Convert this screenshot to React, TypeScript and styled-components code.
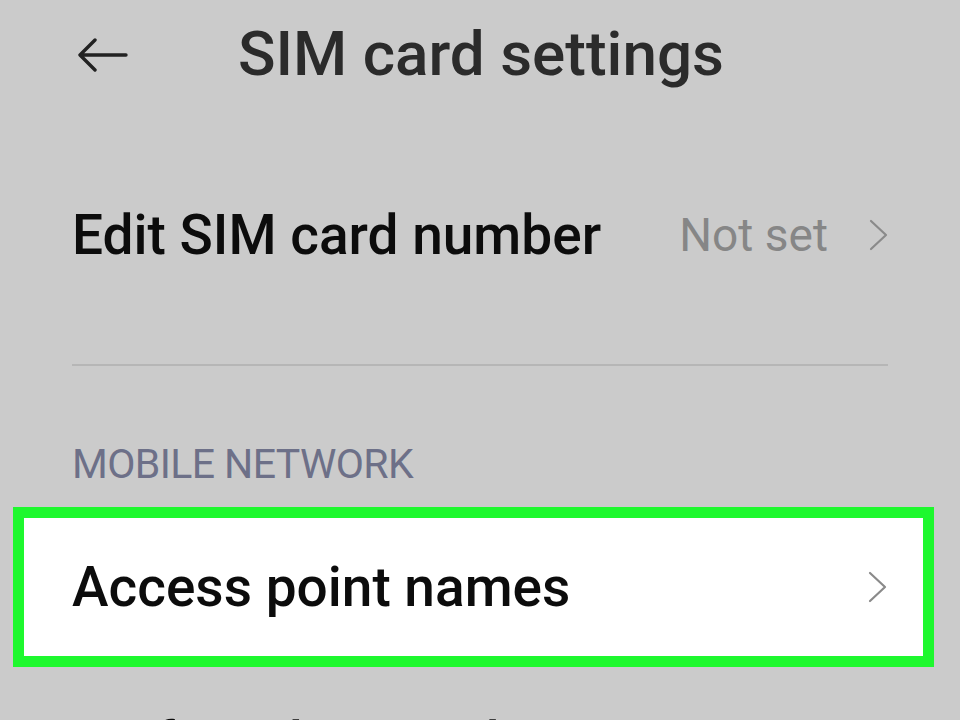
import React from 'react';
import styled, { createGlobalStyle } from 'styled-components';

const GlobalStyle = createGlobalStyle`
  html, body {
    margin: 0;
    padding: 0;
    background: #cbcbcb;
    overflow: hidden;
  }
  body {
    font-family: Roboto, "Liberation Sans", Arial, sans-serif;
  }
`;

const Screen = styled.div`
  width: 960px;
  height: 720px;
  background: #cbcbcb;
  overflow: hidden;
`;

const Header = styled.header`
  display: flex;
  align-items: center;
  gap: 110px;
  height: 108px;
  padding-left: 78px;
`;

const BackButton = styled.button`
  display: flex;
  align-items: center;
  justify-content: center;
  width: 50px;
  height: 34px;
  padding: 0;
  border: 0;
  background: none;
  color: #222222;
  margin-top: 2px;
`;

const Title = styled.h1`
  margin: 0;
  font-size: 62px;
  font-weight: 500;
  line-height: 70px;
  color: #2b2b2b;
`;

const List = styled.div`
  display: flex;
  flex-direction: column;
  padding: 47px 72px 0 72px;
`;

const Row = styled.div<{ $height?: number }>`
  display: flex;
  align-items: center;
  height: ${(p) => p.$height ?? 160}px;
  flex-shrink: 0;
  box-sizing: border-box;
`;

const Highlight = styled(Row)`
  background: #ffffff;
  border: 11px solid #1ef82e;
  margin: 18px -46px 0 -59px;
  padding: 0 36px 0 48px;
`;

const Label = styled.span<{ $size?: number }>`
  flex: 1;
  font-size: ${(p) => p.$size ?? 55}px;
  font-weight: 500;
  color: #0c0c0c;
  white-space: nowrap;
`;

const Value = styled.span`
  font-size: 46px;
  color: #868686;
  margin-right: 41px;
`;

const Divider = styled.hr`
  margin: 49px 0 0 0;
  border: 0;
  height: 2px;
  background: #b6b6b6;
`;

const SectionTitle = styled.div`
  margin-top: 73px;
  font-size: 41px;
  line-height: 50px;
  color: #6d7088;
  letter-spacing: -0.6px;
`;

const Chevron = () => (
  <svg width="19" height="32" viewBox="0 0 19 32" fill="none">
    <path d="M2 2 L17 16 L2 30" stroke="#8a8a8a" strokeWidth="2.2" strokeLinecap="round" strokeLinejoin="round" />
  </svg>
);

const BackArrow = () => (
  <svg width="50" height="34" viewBox="0 0 50 34" fill="none">
    <path
      d="M48 17 H3 M17 2 L2 17 L17 32"
      stroke="currentColor"
      strokeWidth="3.4"
      strokeLinecap="round"
      strokeLinejoin="round"
    />
  </svg>
);

export default function App() {
  return (
    <Screen>
      <GlobalStyle />
      <Header>
        <BackButton aria-label="Back">
          <BackArrow />
        </BackButton>
        <Title>SIM card settings</Title>
      </Header>
      <List>
        <Row>
          <Label>Edit SIM card number</Label>
          <Value>Not set</Value>
          <Chevron />
        </Row>
        <Divider />
        <SectionTitle>MOBILE NETWORK</SectionTitle>
        <Highlight>
          <Label>Access point names</Label>
          <Chevron />
        </Highlight>
        <Row $height={149}>
          <Label>Preferred network type</Label>
          <Chevron />
        </Row>
      </List>
    </Screen>
  );
}
